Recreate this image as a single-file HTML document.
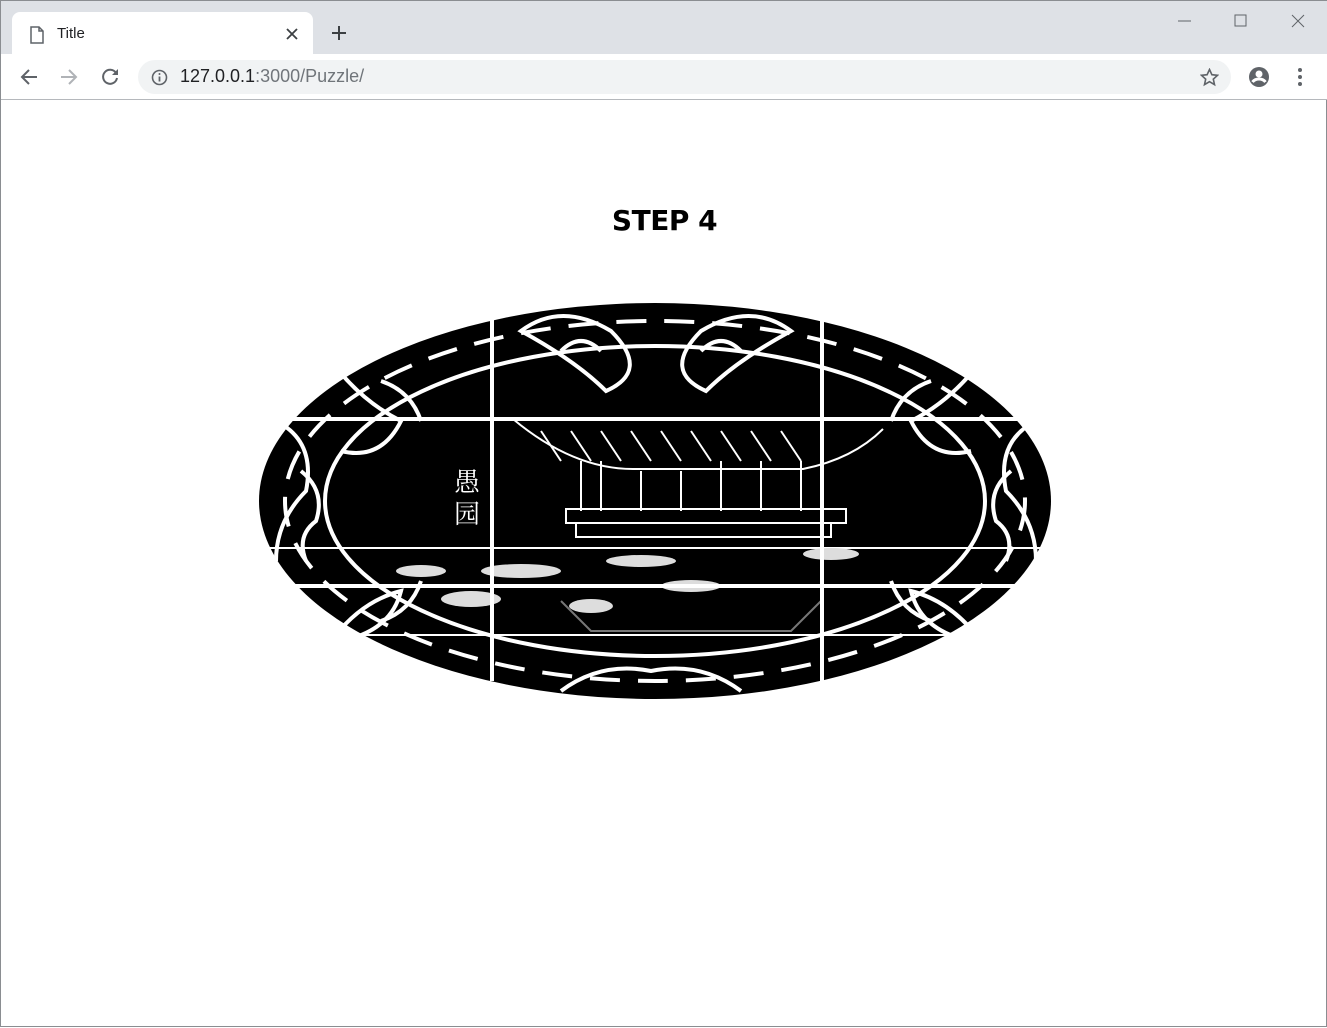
<!DOCTYPE html>
<html><head><meta charset="utf-8"><style>
*{margin:0;padding:0;box-sizing:border-box}
body{width:1327px;height:1027px;overflow:hidden;background:#fff;font-family:"Liberation Sans","Noto Sans CJK SC",sans-serif;position:relative;border:1px solid #8a8d91}
.tabbar{position:absolute;left:0;top:0;width:1327px;height:53px;background:#dee1e6}
.tab{position:absolute;left:11px;top:11px;width:301px;height:43px;background:#fff;border-radius:8px 8px 0 0}
.toolbar{position:absolute;left:0;top:53px;width:1327px;height:46px;background:#fff;border-bottom:1px solid #b5b8bc}
.omni{position:absolute;left:137px;top:6px;width:1093px;height:34px;background:#f1f3f4;border-radius:17px}
h1{position:absolute;top:203px;left:0;width:1327px;text-align:center;font-size:28px;font-weight:bold;font-family:"DejaVu Sans","Liberation Sans",sans-serif;letter-spacing:-0.5px}
</style></head><body>
<div class="tabbar">
 <div class="tab">
  <svg style="position:absolute;left:18px;top:14px" width="14" height="18" viewBox="0 0 14 18"><path d="M1 1h8l4 4v12H1z M9 1v4h4" fill="none" stroke="#5f6368" stroke-width="1.5"/></svg>
  <span style="position:absolute;left:45px;top:13px;font-size:15px;color:#202124">Title</span>
  <svg style="position:absolute;left:274px;top:16px" width="12" height="12"><path d="M1 1L11 11M11 1L1 11" stroke="#3c4043" stroke-width="1.8"/></svg>
 </div>
 <svg style="position:absolute;left:330px;top:24px" width="16" height="16"><path d="M8 1v14M1 8h14" stroke="#3c4043" stroke-width="2"/></svg>
 <svg style="position:absolute;left:1176px;top:12px" width="135" height="16"><path d="M1 8h13" stroke="#5f6368"/><rect x="58" y="2" width="11" height="11" fill="none" stroke="#5f6368"/><path d="M115 2l12 12M127 2l-12 12" stroke="#5f6368"/></svg>
</div>
<div class="toolbar">
 <svg style="position:absolute;left:19px;top:14px" width="18" height="18"><path d="M17 9H3M9 2L2 9l7 7" fill="none" stroke="#5f6368" stroke-width="2"/></svg>
 <svg style="position:absolute;left:59px;top:14px" width="18" height="18"><path d="M1 9h14M9 2l7 7-7 7" fill="none" stroke="#b0b3b7" stroke-width="2"/></svg>
 <svg style="position:absolute;left:100px;top:13px" width="19" height="19"><path d="M15 6A7 7 0 1 0 16 11" fill="none" stroke="#5f6368" stroke-width="2"/><path d="M17 2v6h-6z" fill="#5f6368"/></svg>
 <div class="omni">
  <svg style="position:absolute;left:13px;top:9px" width="17" height="17"><circle cx="8.5" cy="8.5" r="7" fill="none" stroke="#5f6368" stroke-width="1.6"/><path d="M8.5 7.5v5" stroke="#5f6368" stroke-width="1.8"/><circle cx="8.5" cy="5" r="1" fill="#5f6368"/></svg>
  <span style="position:absolute;left:42px;top:6px;font-size:18px;color:#202124">127.0.0.1<span style="color:#70757a">:3000/Puzzle/</span></span>
  <svg style="position:absolute;left:1062px;top:8px" width="19" height="19"><path d="M9.5 1.5l2.4 5.2 5.6.6-4.2 3.8 1.2 5.5-5-2.9-5 2.9 1.2-5.5L1.5 7.3l5.6-.6z" fill="none" stroke="#5f6368" stroke-width="1.6"/></svg>
 </div>
 <svg style="position:absolute;left:1247px;top:12px" width="22" height="22"><circle cx="11" cy="11" r="10" fill="#5f6368"/><circle cx="11" cy="8" r="3.5" fill="#fff"/><path d="M4.5 16c3-4 10-4 13 0" stroke="#fff" stroke-width="3" fill="none"/></svg>
 <svg style="position:absolute;left:1296px;top:13px" width="6" height="20"><circle cx="3" cy="3" r="2" fill="#5f6368"/><circle cx="3" cy="10" r="2" fill="#5f6368"/><circle cx="3" cy="17" r="2" fill="#5f6368"/></svg>
</div>
<h1>STEP 4</h1>
<svg style="position:absolute;left:0;top:0" width="1327" height="1027">
 <ellipse cx="654" cy="500" rx="396" ry="198" fill="#000"/>
 <g fill="none" stroke="#fff" stroke-width="4">
  <ellipse cx="654" cy="500" rx="330" ry="155"/>
  <ellipse cx="654" cy="500" rx="370" ry="180" stroke-dasharray="30 18"/>
  <path d="M520 330q40 -30 90 0q40 40 -5 60q-30 -30 -85 -60z"/>
  <path d="M790 330q-40 -30 -90 0q-40 40 5 60q30 -30 85 -60z"/>
  <path d="M560 350q20 -20 40 0M700 350q20 -20 40 0"/>
  <path d="M560 690q40 -30 90 -20q50 -10 90 20"/>
  <path d="M275 420q40 20 30 70q-30 30 -30 70"/><path d="M1035 420q-40 20 -30 70q30 30 30 70"/>
  <path d="M330 360q30 40 70 60q-20 40 -60 30"/><path d="M980 360q-30 40 -70 60q20 40 60 30"/>
  <path d="M330 640q30 -40 70 -50q-10 40 -60 50"/><path d="M980 640q-30 -40 -70 -50q10 40 60 50"/>
  <path d="M300 470q25 20 15 50q-20 15 -10 40"/><path d="M1010 470q-25 20 -15 50q20 15 10 40"/>
  <path d="M380 380q30 10 40 40M930 380q-30 10 -40 40M380 620q30 -10 40 -40M930 620q-30 -10 -40 -40"/>
 </g>
 <g fill="none" stroke="#fff" stroke-width="2">
  <path d="M512 418q60 50 120 50h170q50 -10 80 -40"/>
  <path d="M540 430l20 30M570 430l20 30M600 430l20 30M630 430l20 30M660 430l20 30M690 430l20 30M720 430l20 30M750 430l20 30M780 430l20 30"/>
  <path d="M580 460v50M600 460v50M640 470v40M680 470v40M720 460v50M760 460v50M800 460v50"/>
  <rect x="565" y="508" width="280" height="14"/><rect x="575" y="522" width="255" height="14"/>
  <path d="M260 547h780"/>
  <path d="M560 600l30 30h200l30 -30" stroke="#777"/>
 </g>
 <text x="466" y="490" fill="#fff" font-size="26" text-anchor="middle" font-family="Noto Serif CJK SC,serif">愚</text>
 <text x="466" y="522" fill="#fff" font-size="26" text-anchor="middle" font-family="Noto Serif CJK SC,serif">园</text>
 <g fill="#ddd"><ellipse cx="470" cy="598" rx="30" ry="8"/><ellipse cx="590" cy="605" rx="22" ry="7"/><ellipse cx="690" cy="585" rx="30" ry="6"/><ellipse cx="830" cy="553" rx="28" ry="6"/><ellipse cx="520" cy="570" rx="40" ry="7"/><ellipse cx="640" cy="560" rx="35" ry="6"/><ellipse cx="420" cy="570" rx="25" ry="6"/></g>
 <g stroke="#fff">
  <path d="M491 318v362M821 318v362" stroke-width="4"/>
  <path d="M280 418h760M265 585h775" stroke-width="4"/>
  <path d="M265 634h770" stroke-width="2"/>
 </g>
</svg>
</body></html>
